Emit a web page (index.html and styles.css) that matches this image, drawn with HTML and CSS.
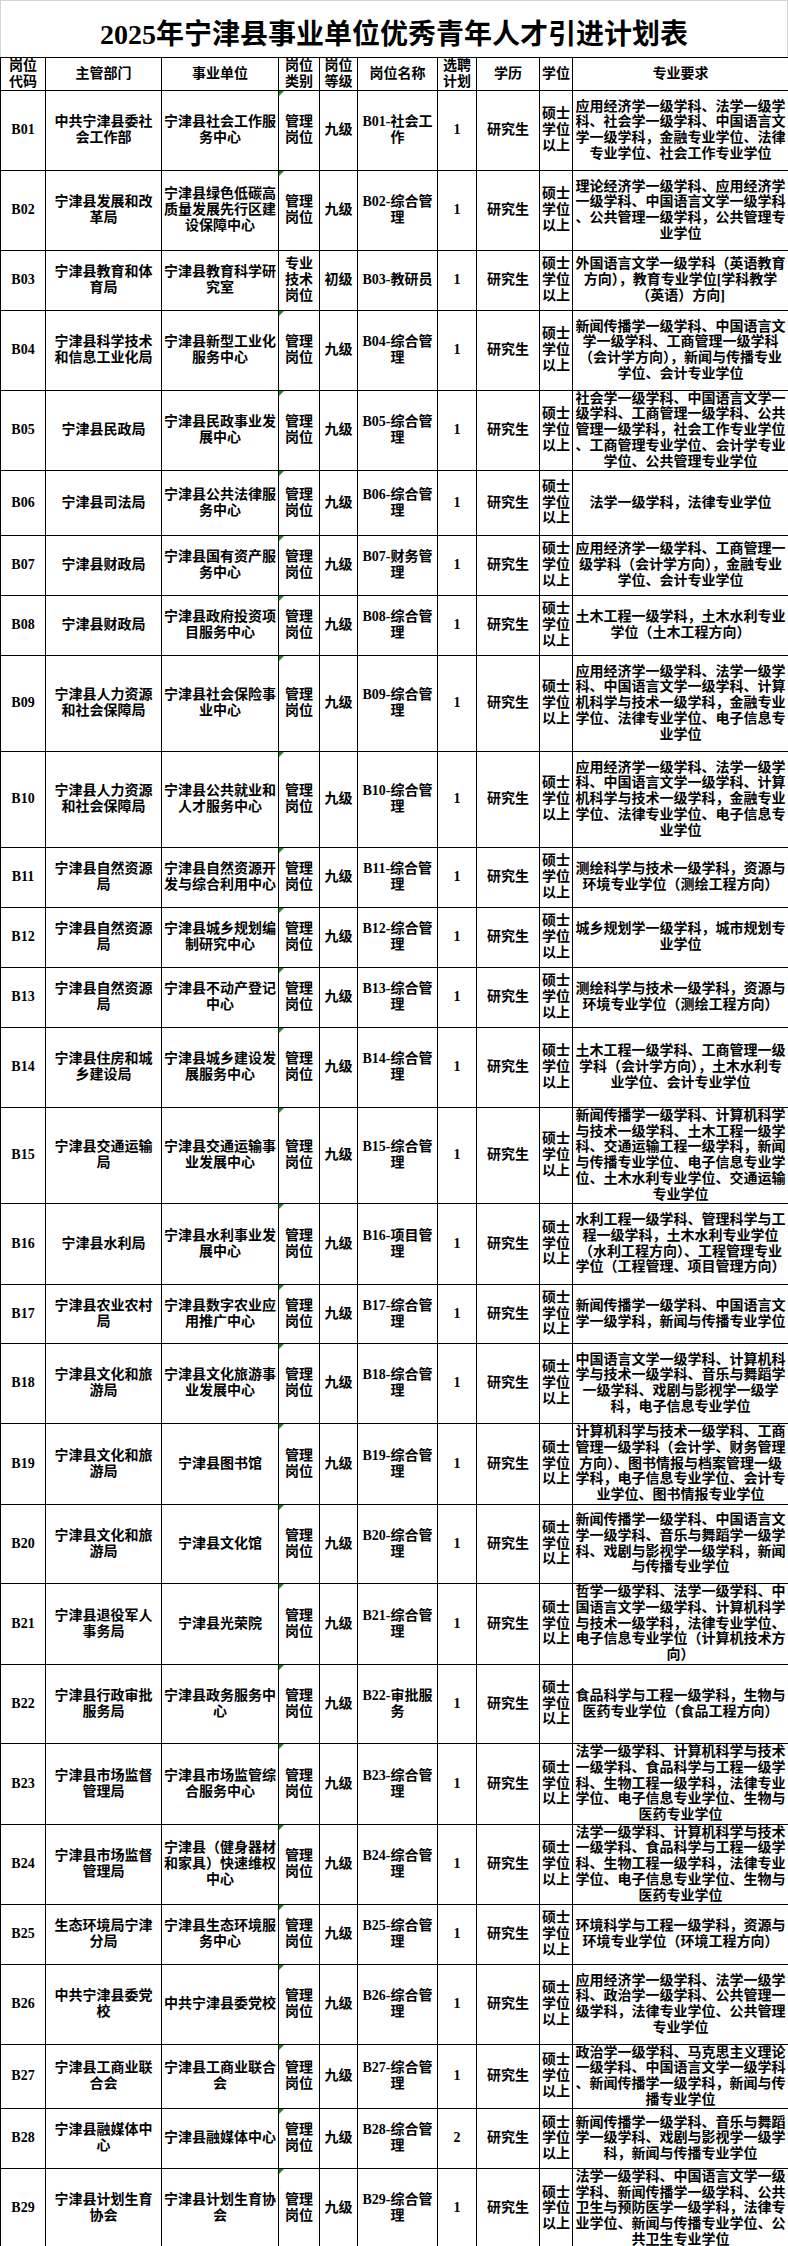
FILE: index.html
```html
<!DOCTYPE html>
<html lang="zh-CN">
<head>
<meta charset="utf-8">
<title>2025年宁津县事业单位优秀青年人才引进计划表</title>
<link rel="stylesheet" href="styles.css">
</head>
<body>
<div class="title">2025年宁津县事业单位优秀青年人才引进计划表</div>
<table class="plan">
<colgroup>
<col class="c1"><col class="c2"><col class="c3"><col class="c4"><col class="c5"><col class="c6"><col class="c7"><col class="c8"><col class="c9"><col class="c10">
</colgroup>
<thead>
<tr class="hd"><th>岗位<br>代码</th><th>主管部门</th><th>事业单位</th><th>岗位<br>类别</th><th>岗位<br>等级</th><th>岗位名称</th><th>选聘<br>计划</th><th>学历</th><th>学位</th><th>专业要求</th></tr>
</thead>
<tbody>
<tr class="h80"><td>B01</td><td>中共宁津县委社<br>会工作部</td><td>宁津县社会工作服<br>务中心</td><td class="mark">管理<br>岗位</td><td>九级</td><td>B01-社会工<br>作</td><td>1</td><td>研究生</td><td>硕士<br>学位<br>以上</td><td>应用经济学一级学科、法学一级学<br>科、社会学一级学科、中国语言文<br>学一级学科，金融专业学位、法律<br>专业学位、社会工作专业学位</td></tr>
<tr class="h80"><td>B02</td><td>宁津县发展和改<br>革局</td><td>宁津县绿色低碳高<br>质量发展先行区建<br>设保障中心</td><td class="mark">管理<br>岗位</td><td>九级</td><td>B02-综合管<br>理</td><td>1</td><td>研究生</td><td>硕士<br>学位<br>以上</td><td>理论经济学一级学科、应用经济学<br>一级学科、中国语言文学一级学科<br>、公共管理一级学科，公共管理专<br>业学位</td></tr>
<tr class="h60"><td>B03</td><td>宁津县教育和体<br>育局</td><td>宁津县教育科学研<br>究室</td><td>专业<br>技术<br>岗位</td><td>初级</td><td>B03-教研员</td><td>1</td><td>研究生</td><td>硕士<br>学位<br>以上</td><td>外国语言文学一级学科（英语教育<br>方向），教育专业学位[学科教学<br>（英语）方向]</td></tr>
<tr class="h80"><td>B04</td><td>宁津县科学技术<br>和信息工业化局</td><td>宁津县新型工业化<br>服务中心</td><td class="mark">管理<br>岗位</td><td>九级</td><td>B04-综合管<br>理</td><td>1</td><td>研究生</td><td>硕士<br>学位<br>以上</td><td>新闻传播学一级学科、中国语言文<br>学一级学科、工商管理一级学科<br>（会计学方向），新闻与传播专业<br>学位、会计专业学位</td></tr>
<tr class="h80"><td>B05</td><td>宁津县民政局</td><td>宁津县民政事业发<br>展中心</td><td class="mark">管理<br>岗位</td><td>九级</td><td>B05-综合管<br>理</td><td>1</td><td>研究生</td><td>硕士<br>学位<br>以上</td><td>社会学一级学科、中国语言文学一<br>级学科、工商管理一级学科、公共<br>管理一级学科，社会工作专业学位<br>、工商管理专业学位、会计学专业<br>学位、公共管理专业学位</td></tr>
<tr class="h65"><td>B06</td><td>宁津县司法局</td><td>宁津县公共法律服<br>务中心</td><td class="mark">管理<br>岗位</td><td>九级</td><td>B06-综合管<br>理</td><td>1</td><td>研究生</td><td>硕士<br>学位<br>以上</td><td>法学一级学科，法律专业学位</td></tr>
<tr class="h60"><td>B07</td><td>宁津县财政局</td><td>宁津县国有资产服<br>务中心</td><td class="mark">管理<br>岗位</td><td>九级</td><td>B07-财务管<br>理</td><td>1</td><td>研究生</td><td>硕士<br>学位<br>以上</td><td>应用经济学一级学科、工商管理一<br>级学科（会计学方向），金融专业<br>学位、会计专业学位</td></tr>
<tr class="h60"><td>B08</td><td>宁津县财政局</td><td>宁津县政府投资项<br>目服务中心</td><td class="mark">管理<br>岗位</td><td>九级</td><td>B08-综合管<br>理</td><td>1</td><td>研究生</td><td>硕士<br>学位<br>以上</td><td>土木工程一级学科，土木水利专业<br>学位（土木工程方向）</td></tr>
<tr class="h96"><td>B09</td><td>宁津县人力资源<br>和社会保障局</td><td>宁津县社会保险事<br>业中心</td><td class="mark">管理<br>岗位</td><td>九级</td><td>B09-综合管<br>理</td><td>1</td><td>研究生</td><td>硕士<br>学位<br>以上</td><td>应用经济学一级学科、法学一级学<br>科、中国语言文学一级学科、计算<br>机科学与技术一级学科，金融专业<br>学位、法律专业学位、电子信息专<br>业学位</td></tr>
<tr class="h96"><td>B10</td><td>宁津县人力资源<br>和社会保障局</td><td>宁津县公共就业和<br>人才服务中心</td><td class="mark">管理<br>岗位</td><td>九级</td><td>B10-综合管<br>理</td><td>1</td><td>研究生</td><td>硕士<br>学位<br>以上</td><td>应用经济学一级学科、法学一级学<br>科、中国语言文学一级学科、计算<br>机科学与技术一级学科，金融专业<br>学位、法律专业学位、电子信息专<br>业学位</td></tr>
<tr class="h60"><td>B11</td><td>宁津县自然资源<br>局</td><td>宁津县自然资源开<br>发与综合利用中心</td><td class="mark">管理<br>岗位</td><td>九级</td><td>B11-综合管<br>理</td><td>1</td><td>研究生</td><td>硕士<br>学位<br>以上</td><td>测绘科学与技术一级学科，资源与<br>环境专业学位（测绘工程方向）</td></tr>
<tr class="h60"><td>B12</td><td>宁津县自然资源<br>局</td><td>宁津县城乡规划编<br>制研究中心</td><td class="mark">管理<br>岗位</td><td>九级</td><td>B12-综合管<br>理</td><td>1</td><td>研究生</td><td>硕士<br>学位<br>以上</td><td>城乡规划学一级学科，城市规划专<br>业学位</td></tr>
<tr class="h60"><td>B13</td><td>宁津县自然资源<br>局</td><td>宁津县不动产登记<br>中心</td><td class="mark">管理<br>岗位</td><td>九级</td><td>B13-综合管<br>理</td><td>1</td><td>研究生</td><td>硕士<br>学位<br>以上</td><td>测绘科学与技术一级学科，资源与<br>环境专业学位（测绘工程方向）</td></tr>
<tr class="h80"><td>B14</td><td>宁津县住房和城<br>乡建设局</td><td>宁津县城乡建设发<br>展服务中心</td><td class="mark">管理<br>岗位</td><td>九级</td><td>B14-综合管<br>理</td><td>1</td><td>研究生</td><td>硕士<br>学位<br>以上</td><td>土木工程一级学科、工商管理一级<br>学科（会计学方向），土木水利专<br>业学位、会计专业学位</td></tr>
<tr class="h96"><td>B15</td><td>宁津县交通运输<br>局</td><td>宁津县交通运输事<br>业发展中心</td><td class="mark">管理<br>岗位</td><td>九级</td><td>B15-综合管<br>理</td><td>1</td><td>研究生</td><td>硕士<br>学位<br>以上</td><td>新闻传播学一级学科、计算机科学<br>与技术一级学科、土木工程一级学<br>科、交通运输工程一级学科，新闻<br>与传播专业学位、电子信息专业学<br>位、土木水利专业学位、交通运输<br>专业学位</td></tr>
<tr class="h81"><td>B16</td><td>宁津县水利局</td><td>宁津县水利事业发<br>展中心</td><td class="mark">管理<br>岗位</td><td>九级</td><td>B16-项目管<br>理</td><td>1</td><td>研究生</td><td>硕士<br>学位<br>以上</td><td>水利工程一级学科、管理科学与工<br>程一级学科，土木水利专业学位<br>（水利工程方向）、工程管理专业<br>学位（工程管理、项目管理方向）</td></tr>
<tr class="h59"><td>B17</td><td>宁津县农业农村<br>局</td><td>宁津县数字农业应<br>用推广中心</td><td class="mark">管理<br>岗位</td><td>九级</td><td>B17-综合管<br>理</td><td>1</td><td>研究生</td><td>硕士<br>学位<br>以上</td><td>新闻传播学一级学科、中国语言文<br>学一级学科，新闻与传播专业学位</td></tr>
<tr class="h80"><td>B18</td><td>宁津县文化和旅<br>游局</td><td>宁津县文化旅游事<br>业发展中心</td><td class="mark">管理<br>岗位</td><td>九级</td><td>B18-综合管<br>理</td><td>1</td><td>研究生</td><td>硕士<br>学位<br>以上</td><td>中国语言文学一级学科、计算机科<br>学与技术一级学科、音乐与舞蹈学<br>一级学科、戏剧与影视学一级学<br>科，电子信息专业学位</td></tr>
<tr class="h81"><td>B19</td><td>宁津县文化和旅<br>游局</td><td>宁津县图书馆</td><td class="mark">管理<br>岗位</td><td>九级</td><td>B19-综合管<br>理</td><td>1</td><td>研究生</td><td>硕士<br>学位<br>以上</td><td>计算机科学与技术一级学科、工商<br>管理一级学科（会计学、财务管理<br>方向）、图书情报与档案管理一级<br>学科，电子信息专业学位、会计专<br>业学位、图书情报专业学位</td></tr>
<tr class="h79"><td>B20</td><td>宁津县文化和旅<br>游局</td><td>宁津县文化馆</td><td class="mark">管理<br>岗位</td><td>九级</td><td>B20-综合管<br>理</td><td>1</td><td>研究生</td><td>硕士<br>学位<br>以上</td><td>新闻传播学一级学科、中国语言文<br>学一级学科、音乐与舞蹈学一级学<br>科、戏剧与影视学一级学科，新闻<br>与传播专业学位</td></tr>
<tr class="h81"><td>B21</td><td>宁津县退役军人<br>事务局</td><td>宁津县光荣院</td><td class="mark">管理<br>岗位</td><td>九级</td><td>B21-综合管<br>理</td><td>1</td><td>研究生</td><td>硕士<br>学位<br>以上</td><td>哲学一级学科、法学一级学科、中<br>国语言文学一级学科、计算机科学<br>与技术一级学科，法律专业学位、<br>电子信息专业学位（计算机技术方<br>向）</td></tr>
<tr class="h79"><td>B22</td><td>宁津县行政审批<br>服务局</td><td>宁津县政务服务中<br>心</td><td class="mark">管理<br>岗位</td><td>九级</td><td>B22-审批服<br>务</td><td>1</td><td>研究生</td><td>硕士<br>学位<br>以上</td><td>食品科学与工程一级学科，生物与<br>医药专业学位（食品工程方向）</td></tr>
<tr class="h81"><td>B23</td><td>宁津县市场监督<br>管理局</td><td>宁津县市场监管综<br>合服务中心</td><td class="mark">管理<br>岗位</td><td>九级</td><td>B23-综合管<br>理</td><td>1</td><td>研究生</td><td>硕士<br>学位<br>以上</td><td>法学一级学科、计算机科学与技术<br>一级学科、食品科学与工程一级学<br>科、生物工程一级学科，法律专业<br>学位、电子信息专业学位、生物与<br>医药专业学位</td></tr>
<tr class="h80"><td>B24</td><td>宁津县市场监督<br>管理局</td><td>宁津县（健身器材<br>和家具）快速维权<br>中心</td><td class="mark">管理<br>岗位</td><td>九级</td><td>B24-综合管<br>理</td><td>1</td><td>研究生</td><td>硕士<br>学位<br>以上</td><td>法学一级学科、计算机科学与技术<br>一级学科、食品科学与工程一级学<br>科、生物工程一级学科，法律专业<br>学位、电子信息专业学位、生物与<br>医药专业学位</td></tr>
<tr class="h60"><td>B25</td><td>生态环境局宁津<br>分局</td><td>宁津县生态环境服<br>务中心</td><td class="mark">管理<br>岗位</td><td>九级</td><td>B25-综合管<br>理</td><td>1</td><td>研究生</td><td>硕士<br>学位<br>以上</td><td>环境科学与工程一级学科，资源与<br>环境专业学位（环境工程方向）</td></tr>
<tr class="h80"><td>B26</td><td>中共宁津县委党<br>校</td><td>中共宁津县委党校</td><td class="mark">管理<br>岗位</td><td>九级</td><td>B26-综合管<br>理</td><td>1</td><td>研究生</td><td>硕士<br>学位<br>以上</td><td>应用经济学一级学科、法学一级学<br>科、政治学一级学科、公共管理一<br>级学科，法律专业学位、公共管理<br>专业学位</td></tr>
<tr class="h64"><td>B27</td><td>宁津县工商业联<br>合会</td><td>宁津县工商业联合<br>会</td><td class="mark">管理<br>岗位</td><td>九级</td><td>B27-综合管<br>理</td><td>1</td><td>研究生</td><td>硕士<br>学位<br>以上</td><td>政治学一级学科、马克思主义理论<br>一级学科、中国语言文学一级学科<br>、新闻传播学一级学科，新闻与传<br>播专业学位</td></tr>
<tr class="h60"><td>B28</td><td>宁津县融媒体中<br>心</td><td>宁津县融媒体中心</td><td class="mark">管理<br>岗位</td><td>九级</td><td>B28-综合管<br>理</td><td>2</td><td>研究生</td><td>硕士<br>学位<br>以上</td><td>新闻传播学一级学科、音乐与舞蹈<br>学一级学科、戏剧与影视学一级学<br>科，新闻与传播专业学位</td></tr>
<tr class="h80"><td>B29</td><td>宁津县计划生育<br>协会</td><td>宁津县计划生育协<br>会</td><td class="mark">管理<br>岗位</td><td>九级</td><td>B29-综合管<br>理</td><td>1</td><td>研究生</td><td>硕士<br>学位<br>以上</td><td>法学一级学科、中国语言文学一级<br>学科、新闻传播学一级学科、公共<br>卫生与预防医学一级学科，法律专<br>业学位、新闻与传播专业学位、公<br>共卫生专业学位</td></tr>
</tbody>
</table>
</body>
</html>
```

FILE: styles.css
```css
html, body {
  margin: 0;
  padding: 0;
  background: #ffffff;
}

body {
  width: 788px;
  font-family: "Liberation Serif", "Noto Sans CJK SC", serif;
  color: #000000;
}

.title {
  height: 57px;
  box-sizing: border-box;
  border: 1px solid #d4d4d4;
  border-bottom: none;
  display: flex;
  align-items: center;
  justify-content: center;
  font-size: 28px;
  font-weight: 700;
  padding-top: 5px;
}

.plan {
  border-collapse: collapse;
  table-layout: fixed;
  width: 788px;
}

.c1 { width: 45px; }
.c2 { width: 116px; }
.c3 { width: 117px; }
.c4 { width: 41px; }
.c5 { width: 38px; }
.c6 { width: 80px; }
.c7 { width: 39px; }
.c8 { width: 63px; }
.c9 { width: 33px; }
.c10 { width: 216px; }

.plan th,
.plan td {
  border: 1px solid #000000;
  padding: 0;
  font-size: 14px;
  line-height: 15.8px;
  font-weight: 700;
  text-align: center;
  vertical-align: middle;
  white-space: nowrap;
}

.plan td.mark {
  position: relative;
}

.plan td.mark::before {
  content: "";
  position: absolute;
  left: 0;
  top: 0;
  width: 0;
  height: 0;
  border-top: 5px solid #1f8a1f;
  border-right: 5px solid transparent;
}

.hd { height: 31px; }
.h59 { height: 59px; }
.h60 { height: 60px; }
.h64 { height: 64px; }
.h65 { height: 65px; }
.h79 { height: 79px; }
.h80 { height: 80px; }
.h81 { height: 81px; }
.h96 { height: 96px; }
```
